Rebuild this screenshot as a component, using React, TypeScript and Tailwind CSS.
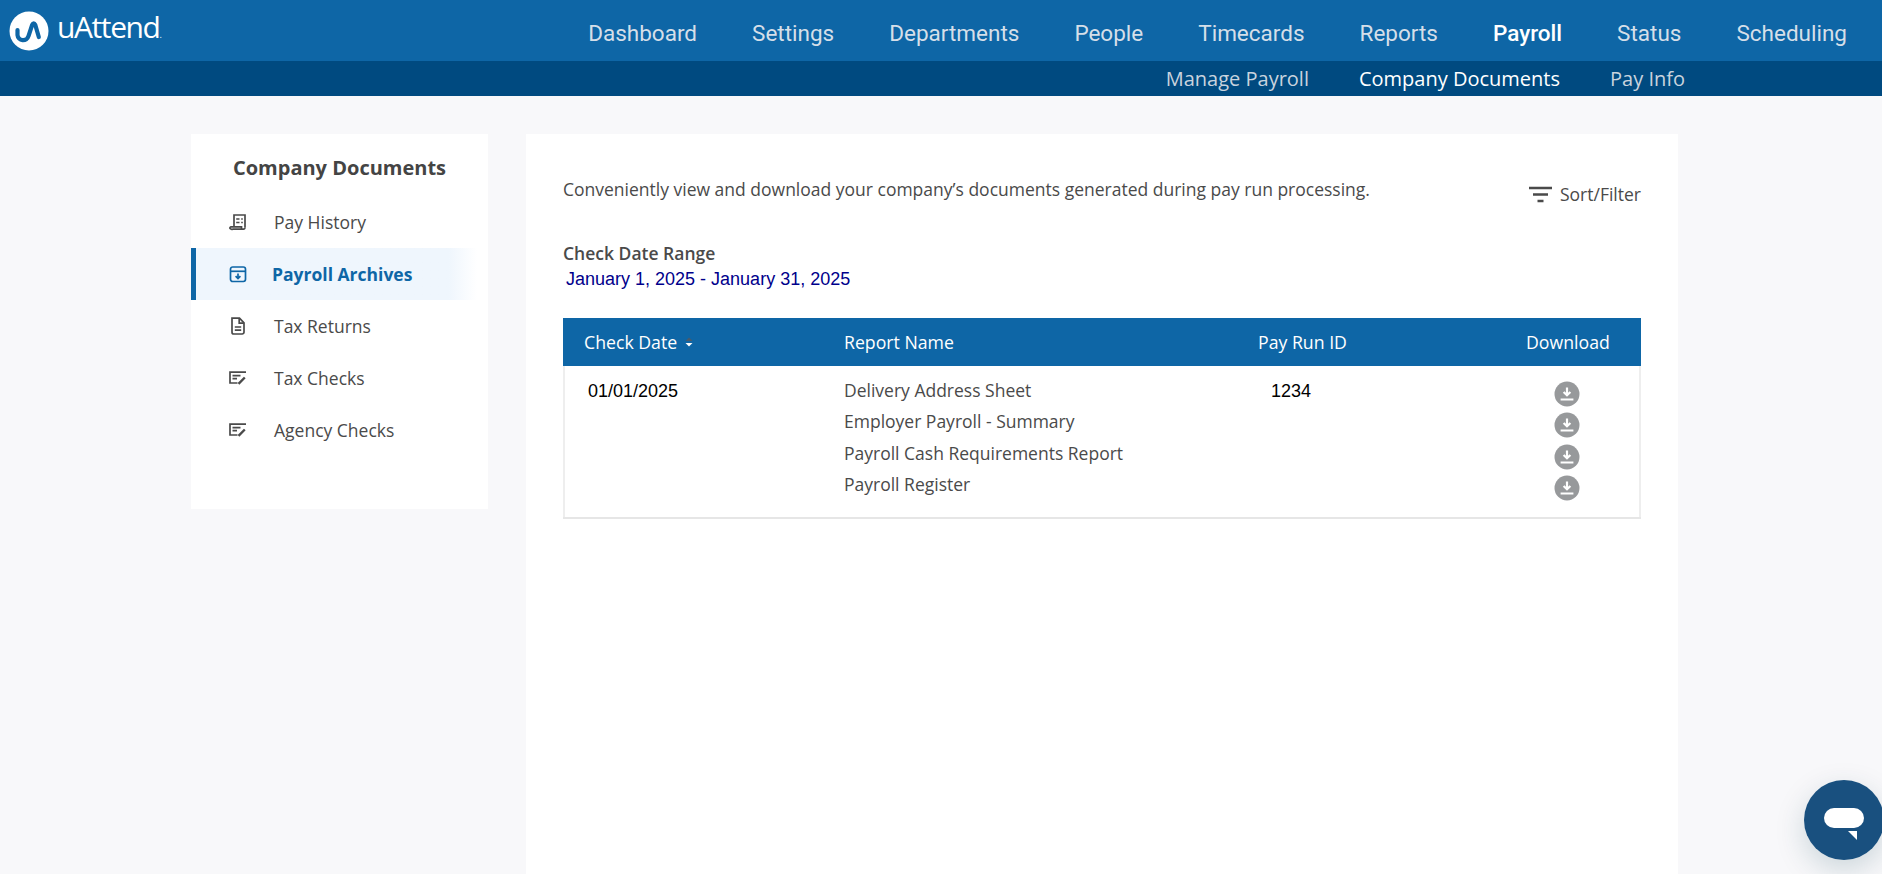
import React from "react";

const OPEN = "font-['Open_Sans',sans-serif]";
const ARIAL = "font-['Liberation_Sans',Arial,sans-serif]";

function Logo() {
  return (
    <div className="flex items-center gap-[9px] ml-[9px]">
      <svg width="40" height="40" viewBox="0 0 40 40">
        <circle cx="20" cy="20" r="19.5" fill="#fff" />
        <path d="M8.5 19 v5 a5.6 5.6 0 0 0 11 1 l3.6 -11 q1.6 -3.4 3.2 0 l3.5 12" fill="none" stroke="#0e66a6" strokeWidth="4.2" strokeLinecap="round" />
      </svg>
      <span className="text-white text-[30px] leading-none font-['Open_Sans',sans-serif] font-normal tracking-[-1.4px] -mt-[7px] -ml-[1px]">
        uAttend<span className="text-[9px]">.</span>
      </span>
    </div>
  );
}

const mainNav = ["Dashboard", "Settings", "Departments", "People", "Timecards", "Reports", "Payroll", "Status", "Scheduling"];

function SideIcon({ kind, active }: { kind: string; active?: boolean }) {
  const c = active ? "#0e66a6" : "#4a4a4a";
  if (kind === "history")
    return (
      <svg width="18" height="18" viewBox="0 0 18 18" fill="none" stroke={c} strokeWidth="1.7">
        <path d="M5 14 V2 h11 V14.5" />
        <path d="M2 13.8 h10.5 v2.4 H3.8 a1.8 1.2 0 0 1 -1.8 -2.4 Z M12.5 16.2 h2 a1.6 1.6 0 0 0 1.5 -1.7" />
        <path d="M7.2 6 h3.3 M12.2 6 h1.6 M7.2 9.4 h3.3 M12.2 9.4 h1.6" strokeWidth="1.5" />
      </svg>
    );
  if (kind === "archive")
    return (
      <svg width="18" height="18" viewBox="0 0 18 18" fill="none" stroke={c} strokeWidth="1.7">
        <rect x="1.5" y="2" width="15" height="14.5" rx="2.2" />
        <path d="M1.5 6.3 h15" />
        <path d="M9 8.5 v5 M6.6 11.2 L9 13.6 L11.4 11.2" />
      </svg>
    );
  if (kind === "doc")
    return (
      <svg width="18" height="18" viewBox="0 0 18 18" fill="none" stroke={c} strokeWidth="1.7">
        <path d="M3 1.2 h7.5 l4.5 4.6 v9.4 a1.8 1.8 0 0 1 -1.8 1.8 H4.8 a1.8 1.8 0 0 1 -1.8 -1.8 Z" />
        <path d="M10.2 1.5 v4.7 h4.6 M5.8 10 h6.4 M5.8 13.2 h6.4" />
      </svg>
    );
  return (
    <svg width="18" height="14" viewBox="0 0 18 14" fill="none" stroke={c} strokeWidth="1.7">
      <path d="M17 1.2 H1 V12 h7.5" />
      <path d="M3.5 4.6 h8 M3.5 7.6 h4.5" />
      <path d="M9.5 12.8 L15.8 6.5" strokeWidth="2.4" />
    </svg>
  );
}

const sideItems = [
  { label: "Pay History", kind: "history" },
  { label: "Payroll Archives", kind: "archive", active: true },
  { label: "Tax Returns", kind: "doc" },
  { label: "Tax Checks", kind: "check" },
  { label: "Agency Checks", kind: "check" },
];

function DownloadIcon() {
  return (
    <svg width="26" height="26" viewBox="0 0 26 26" className="block">
      <circle cx="13" cy="13" r="12.5" fill="#97999b" />
      <path d="M13 6.5 v7.5 M9.6 11 L13 14.3 L16.4 11" fill="none" stroke="#fff" strokeWidth="2.2" />
      <path d="M6.6 18.5 h12.8" stroke="#fff" strokeWidth="2" />
    </svg>
  );
}

export default function App() {
  return (
    <div className={`h-[874px] overflow-hidden bg-[#f8f8fa] relative ${OPEN}`}>
      <header className="h-[61px] bg-[#0e66a6] flex items-center justify-between pr-[35px]">
        <Logo />
        <nav className="flex items-center gap-[55px] pt-[7px] text-[22.5px] text-[#d5dfe9] font-['Roboto',sans-serif]">
          {mainNav.map((n) => (
            <span key={n} className={n === "Payroll" ? "text-white font-medium" : ""}>
              {n}
            </span>
          ))}
        </nav>
      </header>
      <div className="h-[35px] bg-[#004a80] flex items-center justify-end pr-[197px] gap-[50px] text-[20px] text-[#c9d3de]">
        <span>Manage Payroll</span>
        <span className="text-white font-medium">Company Documents</span>
        <span>Pay Info</span>
      </div>

      <div className="flex items-start gap-[38px] pl-[191px] pt-[38px]">
        <aside className="w-[297px] h-[375px] bg-white pt-[21px] shrink-0">
          <h2 className="text-[20px] leading-[26px] font-bold text-[#444] text-center">Company Documents</h2>
          <ul className="mt-[15px]">
            {sideItems.map((it) => (
              <li
                key={it.label}
                className={
                  it.active
                    ? "h-[52px] flex items-center border-l-[5px] border-[#0e66a6] bg-gradient-to-r from-[#eff6fd] from-90% to-white mr-[11px] pl-[33px] gap-[27px]"
                    : "h-[52px] flex items-center pl-[38px] gap-[27px]"
                }
              >
                <span className="w-[18px] flex justify-center shrink-0">
                  <SideIcon kind={it.kind} active={it.active} />
                </span>
                <span className={it.active ? "text-[17.5px] font-bold text-[#0e66a6] -ml-[2px]" : "text-[17.5px] text-[#4a4a4a]"}>{it.label}</span>
              </li>
            ))}
          </ul>
        </aside>

        <main className="w-[1152px] h-[740px] bg-white px-[37px] pt-[43px] shrink-0">
          <div className="flex justify-between items-start h-[34px]">
            <p className="text-[17.5px] leading-[24px] text-[#4a4a4a]">
              Conveniently view and download your company’s documents generated during pay run processing.
            </p>
            <div className="flex items-center gap-[7px] mt-[5px] text-[17.5px] leading-[24px] text-[#4a4a4a]">
              <svg width="24" height="18" viewBox="0 0 24 18" className="mt-[1px]">
                <path d="M0 2 h23 M4 8.5 h15 M8.5 15 h6" stroke="#4a4a4a" strokeWidth="2.4" />
              </svg>
              Sort/Filter
            </div>
          </div>

          <div className="mt-[30px] text-[17.5px] leading-[24px] font-semibold text-[#4a4a4a]">Check Date Range</div>
          <div className={`${ARIAL} ml-[3px] mt-[3px] text-[18px] leading-[22px] text-[#00008b]`}>
            January 1, 2025 - January 31, 2025
          </div>

          <div className="mt-[28px] border-b-2 border-[#e6e6e6]">
            <div className="h-[48px] bg-[#0e66a6] flex items-center text-white text-[17.7px] font-medium">
              <div className="w-[259px] pl-[21px] flex items-center gap-[8px]">
                Check Date
                <svg width="8" height="10" viewBox="0 0 8 10">
                  <path d="M0.5 4 L4 0.5 L7.5 4 Z" fill="#4a5a6a" />
                  <path d="M0.5 6 L4 9.5 L7.5 6 Z" fill="#fff" />
                </svg>
              </div>
              <div className="w-[414px] pl-[22px]">Report Name</div>
              <div className="w-[260px] pl-[22px]">Pay Run ID</div>
              <div className="flex-1 pl-[30px]">Download</div>
            </div>
            <div className="flex h-[151px] border-x-2 border-[#eeeeee]">
              <div className={`${ARIAL} w-[257px] pl-[23px] pt-[13px] text-[18px] leading-[24px] text-black`}>01/01/2025</div>
              <div className="w-[414px] pl-[22px] pt-[12px] flex flex-col gap-[7.3px] text-[17.5px] leading-[24px] text-[#4a4a4a]">
                <span>Delivery Address Sheet</span>
                <span>Employer Payroll - Summary</span>
                <span>Payroll Cash Requirements Report</span>
                <span>Payroll Register</span>
              </div>
              <div className={`${ARIAL} w-[260px] pl-[35px] pt-[13px] text-[18px] leading-[24px] text-black`}>1234</div>
              <div className="flex-1 pt-[15px] pl-[58px] flex flex-col gap-[5.3px]">
                <DownloadIcon />
                <DownloadIcon />
                <DownloadIcon />
                <DownloadIcon />
              </div>
            </div>
          </div>
        </main>
      </div>

      <div className="absolute left-[1804px] top-[780px] w-[80px] h-[80px] rounded-full bg-[#19507f] shadow-[0_10px_30px_rgba(0,60,80,0.18)]">
        <div className="absolute left-[20px] top-[28px] w-[40px] h-[20px] rounded-[10px] bg-white" />
        <svg className="absolute left-[44px] top-[51px]" width="9" height="9" viewBox="0 0 9 9">
          <path d="M0 0 H9 V9 Z" fill="#fff" />
        </svg>
      </div>
    </div>
  );
}
